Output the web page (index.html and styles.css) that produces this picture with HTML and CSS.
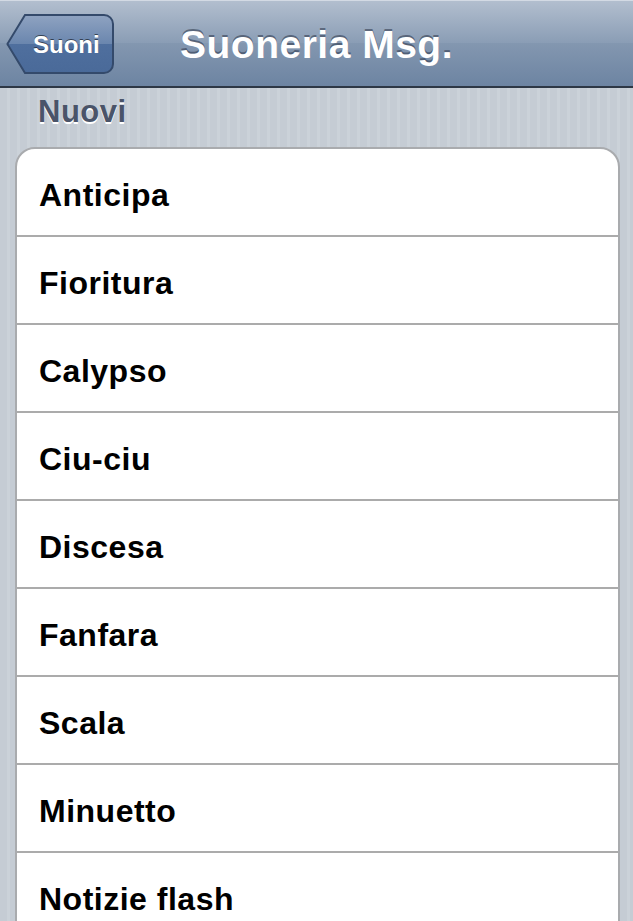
FILE: index.html
```html
<!DOCTYPE html>
<html lang="it">
<head>
  <meta charset="UTF-8">
  <meta name="viewport" content="width=device-width, initial-scale=1.0">
  <title>Suoneria Msg.</title>
  <link rel="stylesheet" href="styles.css">
</head>
<body>
  <div class="navbar">
    <a class="back-btn" href="#">
      <svg class="back-shape" width="108" height="60" viewBox="0 0 108 60">
        <defs>
          <linearGradient id="backFill" x1="0" y1="0" x2="0" y2="1">
            <stop offset="0" stop-color="#8fa3c1"/>
            <stop offset="0.5" stop-color="#6a86ae"/>
            <stop offset="0.5" stop-color="#4f6f9e"/>
            <stop offset="1" stop-color="#4a6a99"/>
          </linearGradient>
        </defs>
        <path d="M19 1 H98 A9 9 0 0 1 107 10 V50 A9 9 0 0 1 98 59 H19 L2 31 Q1 30 2 29 Z" fill="url(#backFill)" stroke="#344a6b" stroke-width="2"/>
      </svg>
      <span class="back-label">Suoni</span>
    </a>
    <h1 class="title">Suoneria Msg.</h1>
  </div>

  <div class="content">
    <div class="section-header">Nuovi</div>
    <ul class="group">
      <li class="row">Anticipa</li>
      <li class="row">Fioritura</li>
      <li class="row">Calypso</li>
      <li class="row">Ciu-ciu</li>
      <li class="row">Discesa</li>
      <li class="row">Fanfara</li>
      <li class="row">Scala</li>
      <li class="row">Minuetto</li>
      <li class="row">Notizie flash</li>
    </ul>
  </div>
</body>
</html>
```

FILE: styles.css
```css
html, body {
  margin: 0;
  height: 100%;
  overflow: hidden;
}
body {
  font-family: "Liberation Sans", Arial, sans-serif;
  font-weight: bold;
  background: repeating-linear-gradient(90deg, #c5ccd4 0, #c5ccd4 7px, #cbd2d9 7px, #cbd2d9 10px);
}
.navbar {
  position: relative;
  height: 86px;
  border-bottom: 2px solid #2d3745;
  background: linear-gradient(to bottom, #b3bfcf 0%, #8a9db5 50%, #8397b0 50%, #6d84a2 100%);
  box-shadow: inset 0 1px 0 #d3dae4;
  display: flex;
  align-items: center;
  justify-content: center;
}
.back-btn {
  position: absolute;
  left: 6px;
  top: 14px;
  width: 108px;
  height: 60px;
  display: flex;
  align-items: center;
  text-decoration: none;
}
.back-shape {
  position: absolute;
  left: 0;
  top: 0;
}
.back-label {
  position: relative;
  margin-left: 27px;
  font-size: 24px;
  color: #fff;
  text-shadow: 0 -1px 0 rgba(0, 0, 0, 0.55);
  padding-top: 2px;
}
.title {
  margin: 0;
  font-size: 39px;
  color: #fff;
  letter-spacing: 0.5px;
  text-shadow: 0 -2px 0 rgba(40, 50, 70, 0.55);
  padding-top: 4px;
}
.section-header {
  padding: 6px 38px 0;
  height: 53px;
  line-height: 36px;
  font-size: 31px;
  color: #4a5469;
  text-shadow: 0 2px 0 #fff;
  letter-spacing: 0.5px;
}
.group {
  list-style: none;
  margin: 0 13px 0 15px;
  padding: 0;
  background: #fff;
  border: 2px solid #a9abae;
  border-radius: 20px;
}
.row {
  height: 83px;
  padding: 3px 0 0 22px;
  line-height: 87px;
  font-size: 32px;
  letter-spacing: 0.5px;
  color: #000;
  border-bottom: 2px solid #ababab;
}
.row:last-child {
  border-bottom: none;
}
```
